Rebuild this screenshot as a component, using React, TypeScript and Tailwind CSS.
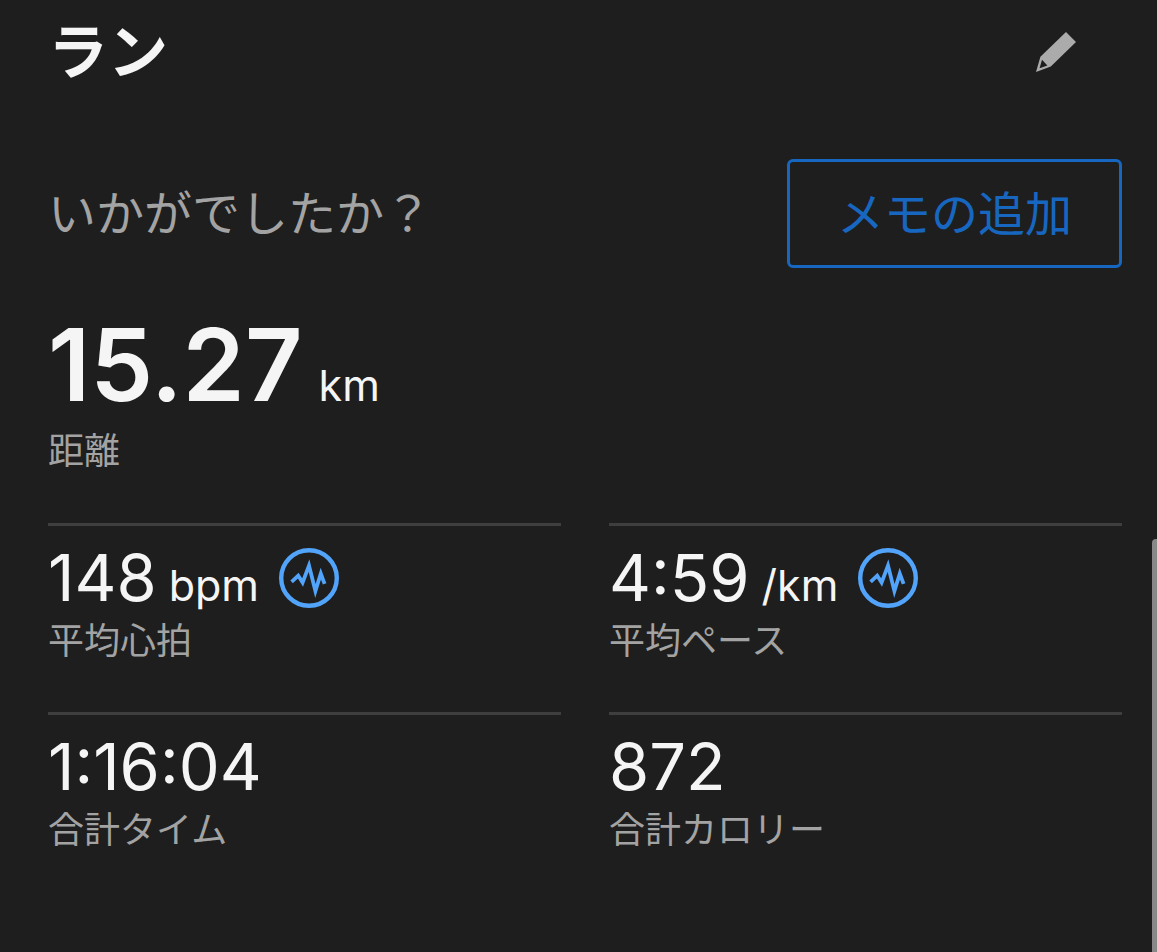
import type { ReactNode } from "react";

function PulseIcon() {
  return (
    <svg viewBox="0 0 60 60" className="size-15" fill="none" stroke="#52a4fb" aria-hidden="true">
      <circle cx="30" cy="30" r="27.8" strokeWidth="4.4" />
      <path d="M12.6 33.8 19.2 27.6 23.6 34.6 30 17.6 36.4 43 41.8 25.6 45.6 35.8" strokeWidth="3.8" strokeMiterlimit="10" />
    </svg>
  );
}

function PencilIcon() {
  return (
    <svg viewBox="0 0 42 42" className="size-[42px]" aria-hidden="true">
      <path
        fill="#ababab"
        fillRule="evenodd"
        d="M31 1 41 11 15.8 35.6 1 41 5.4 25.8ZM7 28.8 4.6 37.2 12.4 34.4Z"
      />
    </svg>
  );
}

function Value({ value, unit, children }: { value: string; unit?: string; children?: ReactNode }) {
  return (
    <dd className="flex h-15 items-center">
      <span className="text-[65px] leading-15">
        {value}
        {unit && <span className="ml-3 text-[43px] leading-none">{unit}</span>}
      </span>
      {children}
    </dd>
  );
}

function Metric({ label, value, unit, graph }: { label: string; value: string; unit?: string; graph?: string }) {
  return (
    <div className="flex flex-col-reverse justify-end gap-[9px] border-t-3 border-[#3e3e3e] pt-[22px] pb-[47px]">
      <dt className="text-4xl leading-12 text-[#a3a3a3]">{label}</dt>
      <Value value={value} unit={unit}>
        {graph && (
          <button type="button" aria-label={graph} className="ml-5 shrink-0">
            <PulseIcon />
          </button>
        )}
      </Value>
    </div>
  );
}

export default function App() {
  return (
    <main
      lang="ja"
      className="relative min-h-screen bg-[#1e1e1e] pr-[35px] pl-12 font-['Inter','Noto_Sans_CJK_JP',sans-serif] text-[#f5f5f5]"
    >
      <header className="flex h-26 items-center justify-between pr-[45px]">
        <h1 className="text-6xl leading-none font-bold">ラン</h1>
        <button type="button" aria-label="編集">
          <PencilIcon />
        </button>
      </header>

      <section className="mt-[55px] flex items-center justify-between">
        <p className="text-5xl leading-none text-[#a3a3a3]">いかがでしたか？</p>
        <button
          type="button"
          className="rounded-md border-3 border-[#1767c0] px-[47px] py-6 text-[47px] leading-[55px] text-[#1767c0]"
        >
          メモの追加
        </button>
      </section>

      <dl className="mt-[49px]">
        <div className="flex flex-col-reverse gap-[14px] pb-12">
          <dt className="text-4xl leading-12 text-[#a3a3a3]">距離</dt>
          <dd className="text-[100px] leading-24 font-semibold">
            15.27
            <span className="ml-4 text-[43px] leading-none font-normal">km</span>
          </dd>
        </div>
        <div className="grid grid-cols-2 gap-x-12">
          <Metric label="平均心拍" value="148" unit="bpm" graph="平均心拍のグラフ" />
          <Metric label="平均ペース" value="4:59" unit="/km" graph="平均ペースのグラフ" />
          <Metric label="合計タイム" value="1:16:04" />
          <Metric label="合計カロリー" value="872" />
        </div>
      </dl>

      <div className="absolute top-[539px] right-0 bottom-0 w-[5px] rounded-tl-sm bg-[#888888]" />
    </main>
  );
}
